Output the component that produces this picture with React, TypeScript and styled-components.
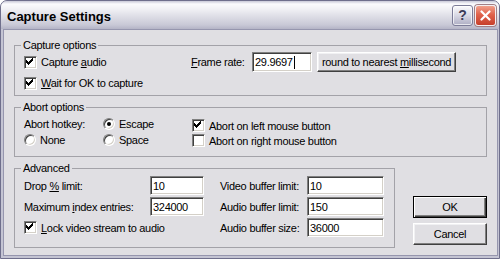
import React from "react";
import styled, { createGlobalStyle } from "styled-components";

const Global = createGlobalStyle`
  html, body { margin: 0; padding: 0; background: #ffffff; }
  body { font-family: "Liberation Sans", Arial, sans-serif; }
`;

const Window = styled.div`
  width: 500px;
  height: 259px;
  box-sizing: border-box;
  display: flex;
  flex-direction: column;
  border: 1px solid #6f6f8c;
  border-radius: 7px 7px 0 0;
  background: #c4c4d3;
  overflow: hidden;
  font-family: "Liberation Sans", Arial, sans-serif;
  font-size: 11px;
  letter-spacing: -0.3px;
  color: #000;
`;

const TitleBar = styled.div`
  height: 28px;
  flex: none;
  display: flex;
  align-items: center;
  gap: 2px;
  padding: 0 3px 0 6px;
  background: linear-gradient(
    to bottom,
    #c9c9d8 0px,
    #fbfbfd 3px,
    #f1f1f5 8px,
    #dcdce5 16px,
    #c8c8d6 24px,
    #b4b4c6 28px
  );
`;

const Title = styled.div`
  flex: 1;
  padding-top: 2px;
  font-weight: bold;
  font-size: 13px;
  letter-spacing: 0;
  color: #000;
`;

const CaptionButton = styled.div<{ $close?: boolean }>`
  width: 21px;
  height: 21px;
  box-sizing: border-box;
  border-radius: 3px;
  display: flex;
  align-items: center;
  justify-content: center;
  border: 1px solid ${(p) => (p.$close ? "#f4eef0" : "#7c7c98")};
  box-shadow: ${(p) =>
    p.$close ? "0 0 0 1px #a07f86" : "inset 0 0 0 1px rgba(255,255,255,0.7)"};
  background: ${(p) =>
    p.$close
      ? "linear-gradient(to bottom, #f0a08c, #e0624b 45%, #c63f2b)"
      : "linear-gradient(to bottom, #fbfbfd, #d8d8e4 50%, #aeaec4)"};
  color: #3c3c58;
  font-weight: bold;
  font-size: 14px;
  letter-spacing: 0;
`;

const Frame = styled.div`
  flex: 1;
  display: flex;
  padding: 0 2px 2px;
`;

const Client = styled.div`
  flex: 1;
  display: flex;
  flex-direction: column;
  gap: 5px;
  border: 1px solid #9696ae;
  background: #e0dfe3;
  padding: 9px 10px 7px;
`;

const Group = styled.fieldset<{ $pad: string }>`
  margin: 0;
  padding: ${(p) => p.$pad};
  border: 1px solid #a3a2a8;
  min-width: 0;
`;

const Legend = styled.legend`
  padding: 0 2px;
  margin-left: -3px;
  line-height: 13px;
  height: 13px;
`;

const CaptureGrid = styled.div`
  display: grid;
  grid-template-columns: 167px 61px 65px 139px;
  grid-template-rows: 20px 20px;
  row-gap: 1px;
  align-items: center;
`;

const Option = styled.label`
  display: flex;
  align-items: center;
  gap: 4px;
  white-space: nowrap;
`;

const SpanOption = styled(Option)`
  grid-column: 1 / 4;
`;

const Text = styled.span`
  white-space: nowrap;
`;

const Box = styled.span`
  width: 13px;
  height: 13px;
  box-sizing: border-box;
  flex: none;
  display: flex;
  align-items: center;
  justify-content: center;
  border: 1px solid;
  border-color: #808080 #ffffff #ffffff #808080;
  box-shadow: inset 1px 1px 0 #404040, inset -1px -1px 0 #d4d0c8;
  background: #ffffff;
`;

const Round = styled(Box)`
  width: 12px;
  height: 12px;
  border-radius: 50%;
`;

const Dot = styled.span`
  width: 4px;
  height: 4px;
  border-radius: 50%;
  background: #000;
`;

const Field = styled.div<{ $w: number; $h: number }>`
  width: ${(p) => p.$w}px;
  height: ${(p) => p.$h}px;
  box-sizing: border-box;
  display: flex;
  align-items: center;
  padding-left: 2px;
  border: 1px solid;
  border-color: #808080 #ffffff #ffffff #808080;
  box-shadow: inset 1px 1px 0 #404040, inset -1px -1px 0 #d4d0c8;
  background: #ffffff;
`;

const Caret = styled.span`
  width: 1px;
  height: 13px;
  background: #000;
  margin-left: 1px;
`;

const Button = styled.div<{ $w: number; $h: number; $default?: boolean }>`
  width: ${(p) => p.$w}px;
  height: ${(p) => p.$h}px;
  box-sizing: border-box;
  display: flex;
  align-items: center;
  justify-content: center;
  white-space: nowrap;
  background: #e0dfe3;
  border: 1px solid;
  border-color: ${(p) =>
    p.$default ? "#000" : "#ffffff #404040 #404040 #ffffff"};
  box-shadow: ${(p) =>
    p.$default
      ? "inset 1px 1px 0 #ffffff, inset -1px -1px 0 #404040, inset -2px -2px 0 #808080"
      : "inset -1px -1px 0 #808080, inset 1px 1px 0 #f1f1f3"};
`;

const AbortBody = styled.div`
  display: flex;
  align-items: flex-start;
`;

const HotkeyGrid = styled.div`
  display: grid;
  grid-template-columns: 79px 89px;
  grid-template-rows: 16px 16px;
  padding-top: 2px;
  align-items: center;
`;

const MouseCol = styled.div`
  display: grid;
  grid-template-rows: 15px 15px;
  margin-top: 4px;
  align-items: center;
`;

const BottomRow = styled.div`
  display: flex;
`;

const AdvancedGroup = styled(Group)`
  width: 381px;
  box-sizing: border-box;
  flex: none;
`;

const AdvGrid = styled.div`
  display: grid;
  grid-template-columns: 126px 54px 16px 87px 77px;
  grid-template-rows: 21px 21px 21px;
  align-items: center;
`;

const RightLabel = styled.span`
  grid-column: 4;
  white-space: nowrap;
`;

const RightField = styled.div`
  grid-column: 5;
`;

const ButtonCol = styled.div`
  display: flex;
  flex-direction: column;
  justify-content: flex-end;
  gap: 5px;
  margin-left: 18px;
  padding-bottom: 3px;
`;

const CheckMark = () => (
  <svg width="9" height="9" viewBox="0 0 9 9" shapeRendering="crispEdges">
    {[
      [1, 3],
      [2, 4],
      [3, 5],
      [4, 4],
      [5, 3],
      [6, 2],
      [7, 1],
    ].map(([x, y]) => (
      <rect key={x} x={x - 1} y={y - 1} width="1" height="3" fill="#000" />
    ))}
  </svg>
);

const Check = ({ on }: { on?: boolean }) => <Box>{on ? <CheckMark /> : null}</Box>;

const Radio = ({ on }: { on?: boolean }) => <Round>{on ? <Dot /> : null}</Round>;

export default function App() {
  return (
    <>
      <Global />
      <Window>
        <TitleBar>
          <Title>Capture Settings</Title>
          <CaptionButton>?</CaptionButton>
          <CaptionButton $close>
            <svg width="11" height="11" viewBox="0 0 11 11">
              <path d="M1.5 1.5 L9.5 9.5 M9.5 1.5 L1.5 9.5" stroke="#fff" strokeWidth="2.2" strokeLinecap="round" />
            </svg>
          </CaptionButton>
        </TitleBar>
        <Frame>
          <Client>
            <Group $pad="0 8px 2px 9px">
              <Legend>Capture options</Legend>
              <CaptureGrid>
                <Option>
                  <Check on />
                  <Text>
                    Capture <u>a</u>udio
                  </Text>
                </Option>
                <Text>
                  <u>F</u>rame rate:
                </Text>
                <Field $w={60} $h={20}>
                  29.9697
                  <Caret />
                </Field>
                <Button $w={139} $h={20}>
                  round to nearest&nbsp;<u>m</u>illisecond
                </Button>
                <Option>
                  <Check on />
                  <Text>
                    <u>W</u>ait for OK to capture
                  </Text>
                </Option>
              </CaptureGrid>
            </Group>

            <Group $pad="0 8px 8px 9px">
              <Legend>Abort options</Legend>
              <AbortBody>
                <HotkeyGrid>
                  <Text>Abort hotkey:</Text>
                  <Option>
                    <Radio on />
                    <Text>Escape</Text>
                  </Option>
                  <Option>
                    <Radio />
                    <Text>None</Text>
                  </Option>
                  <Option>
                    <Radio />
                    <Text>Space</Text>
                  </Option>
                </HotkeyGrid>
                <MouseCol>
                  <Option>
                    <Check on />
                    <Text>Abort on left mouse button</Text>
                  </Option>
                  <Option>
                    <Check />
                    <Text>Abort on right mouse button</Text>
                  </Option>
                </MouseCol>
              </AbortBody>
            </Group>

            <BottomRow>
              <AdvancedGroup $pad="0 10px 9px 9px">
                <Legend>Advanced</Legend>
                <AdvGrid>
                  <Text>
                    Drop <u>%</u> limit:
                  </Text>
                  <Field $w={54} $h={19}>10</Field>
                  <RightLabel>Video buffer limit:</RightLabel>
                  <RightField>
                    <Field $w={77} $h={19}>10</Field>
                  </RightField>

                  <Text>
                    Maximum <u>i</u>ndex entries:
                  </Text>
                  <Field $w={54} $h={19}>324000</Field>
                  <RightLabel>Audio buffer limit:</RightLabel>
                  <RightField>
                    <Field $w={77} $h={19}>150</Field>
                  </RightField>

                  <SpanOption>
                    <Check on />
                    <Text>
                      <u>L</u>ock video stream to audio
                    </Text>
                  </SpanOption>
                  <RightLabel>Audio buffer size:</RightLabel>
                  <RightField>
                    <Field $w={77} $h={19}>36000</Field>
                  </RightField>
                </AdvGrid>
              </AdvancedGroup>
              <ButtonCol>
                <Button $w={74} $h={22} $default>
                  OK
                </Button>
                <Button $w={74} $h={22}>
                  Cancel
                </Button>
              </ButtonCol>
            </BottomRow>
          </Client>
        </Frame>
      </Window>
    </>
  );
}
